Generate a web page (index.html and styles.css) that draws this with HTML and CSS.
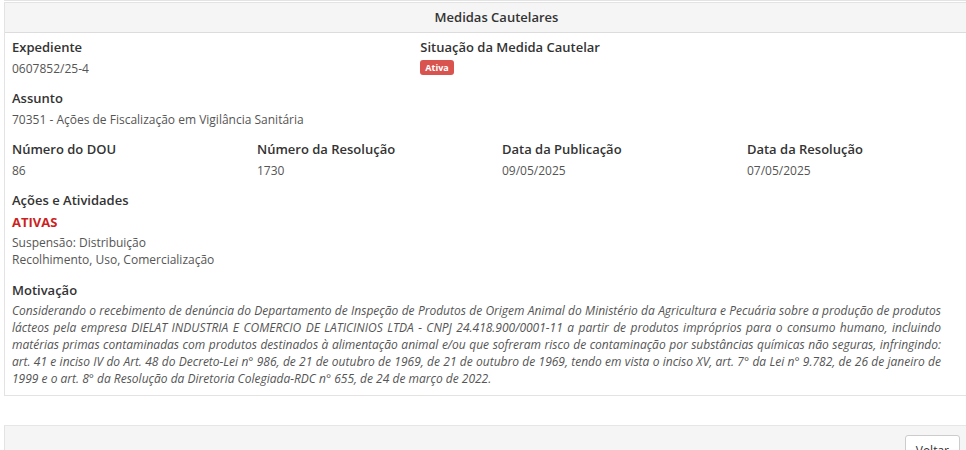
FILE: index.html
```html
<html>
<head>
<title>Medidas Cautelares</title>
<link rel="stylesheet" href="styles.css">
</head>
<body>
    <div class="topLine"></div>
    <div class="panel">
        <div class="panelHeading">Medidas Cautelares</div>
        <div class="panelBody">
            <div class="row">
                <div class="col5">
                    <div class="label">Expediente</div>
                    <div class="value">0607852/25-4</div>
                </div>
                <div class="col7">
                    <div class="label">Situação da Medida Cautelar</div>
                    <div class="value"><span class="badge">Ativa</span></div>
                </div>
            </div>
            <div class="row">
                <div class="col12">
                    <div class="label">Assunto</div>
                    <div class="value">70351 - Ações de Fiscalização em Vigilância Sanitária</div>
                </div>
            </div>
            <div class="row">
                <div class="col3">
                    <div class="label">Número do DOU</div>
                    <div class="value">86</div>
                </div>
                <div class="col3">
                    <div class="label">Número da Resolução</div>
                    <div class="value">1730</div>
                </div>
                <div class="col3">
                    <div class="label">Data da Publicação</div>
                    <div class="value">09/05/2025</div>
                </div>
                <div class="col3">
                    <div class="label">Data da Resolução</div>
                    <div class="value">07/05/2025</div>
                </div>
            </div>
            <div class="row">
                <div class="col12">
                    <div class="label">Ações e Atividades</div>
                    <div class="activeTitle">ATIVAS</div>
                    <div class="activities">Suspensão: Distribuição<br>Recolhimento, Uso, Comercialização</div>
                </div>
            </div>
            <div class="row last">
                <div class="col12">
                    <div class="label">Motivação</div>
                    <p class="motivation">Considerando o recebimento de denúncia do Departamento de Inspeção de Produtos de Origem Animal do Ministério da Agricultura e Pecuária sobre a produção de produtos lácteos pela empresa DIELAT INDUSTRIA E COMERCIO DE LATICINIOS LTDA - CNPJ 24.418.900/0001-11 a partir de produtos impróprios para o consumo humano, incluindo matérias primas contaminadas com produtos destinados à alimentação animal e/ou que sofreram risco de contaminação por substâncias químicas não seguras, infringindo: art. 41 e inciso IV do Art. 48 do Decreto-Lei n° 986, de 21 de outubro de 1969, de 21 de outubro de 1969, tendo em vista o inciso XV, art. 7° da Lei n° 9.782, de 26 de janeiro de 1999 e o art. 8° da Resolução da Diretoria Colegiada-RDC n° 655, de 24 de março de 2022.</p>
                </div>
            </div>
        </div>
    </div>
    <div class="footer">
        <button type="button" class="btnBack">Voltar</button>
    </div>
</body>
</html>
```

FILE: styles.css
```css
body {
    margin: 0;
    font-family: "Open Sans", "Noto Sans", sans-serif;
    font-size: 12px;
    color: #555;
    background-color: white;
    overflow: hidden;}
.topLine {
    height: 1px;
    background-color: #e3e3e3;
    margin-left: 4px;}
.panel {
    margin: 1px 0 0 4px;
    width: 975px;
    border: 1px solid #e3e3e3;
    border-right: none;}
.panelHeading {
    height: 29px;
    line-height: 29px;
    background-color: #f5f5f5;
    border-bottom: 1px solid #dcdcdc;
    text-align: center;
    font-weight: 600;
    font-size: 13px;
    color: #333;
    padding-left: 8px;}
.panelBody {
    padding: 5px 8px 8px 7px;}
.row {
    display: grid;
    grid-template-columns: repeat(12, 81.67px);
    margin-bottom: 11px;}
.row.last {margin-bottom: 0;}
.col3 {grid-column: span 3;}
.col5 {grid-column: span 5;}
.col7 {grid-column: span 7;}
.col12 {grid-column: span 12;}
.label {
    font-weight: 600;
    font-size: 13px;
    color: #333;
    line-height: 19px;
    margin-bottom: 3px;}
.value {
    line-height: 18px;}
.badge {
    display: inline-block;
    background-color: #d9534f;
    color: white;
    font-weight: bold;
    font-size: 9px;
    line-height: 15px;
    padding: 0 5px;
    border-radius: 3px;
    vertical-align: middle;}
.activeTitle {
    color: #cc1f1f;
    font-weight: bold;
    font-size: 13px;
    line-height: 18px;
    margin-bottom: 3px;}
.activities {
    line-height: 17px;
    margin-bottom: 2px;}
.motivation {
    margin: -1px 0 0 0;
    width: 929px;
    font-style: italic;
    text-align: justify;
    line-height: 17px;}
.footer {
    margin: 29px 0 0 4px;
    height: 40px;
    background-color: #f5f5f5;
    border-top: 1px solid #e6e6e6;
    border-left: 1px solid #e3e3e3;
    display: flex;
    justify-content: flex-end;
    align-items: flex-start;
    padding: 9px 6px 0 0;}
.btnBack {
    font-family: "Open Sans", sans-serif;
    font-size: 12px;
    color: #333;
    background-color: white;
    border: 1px solid #ccc;
    border-radius: 3px;
    padding: 6px 10px;}
```
